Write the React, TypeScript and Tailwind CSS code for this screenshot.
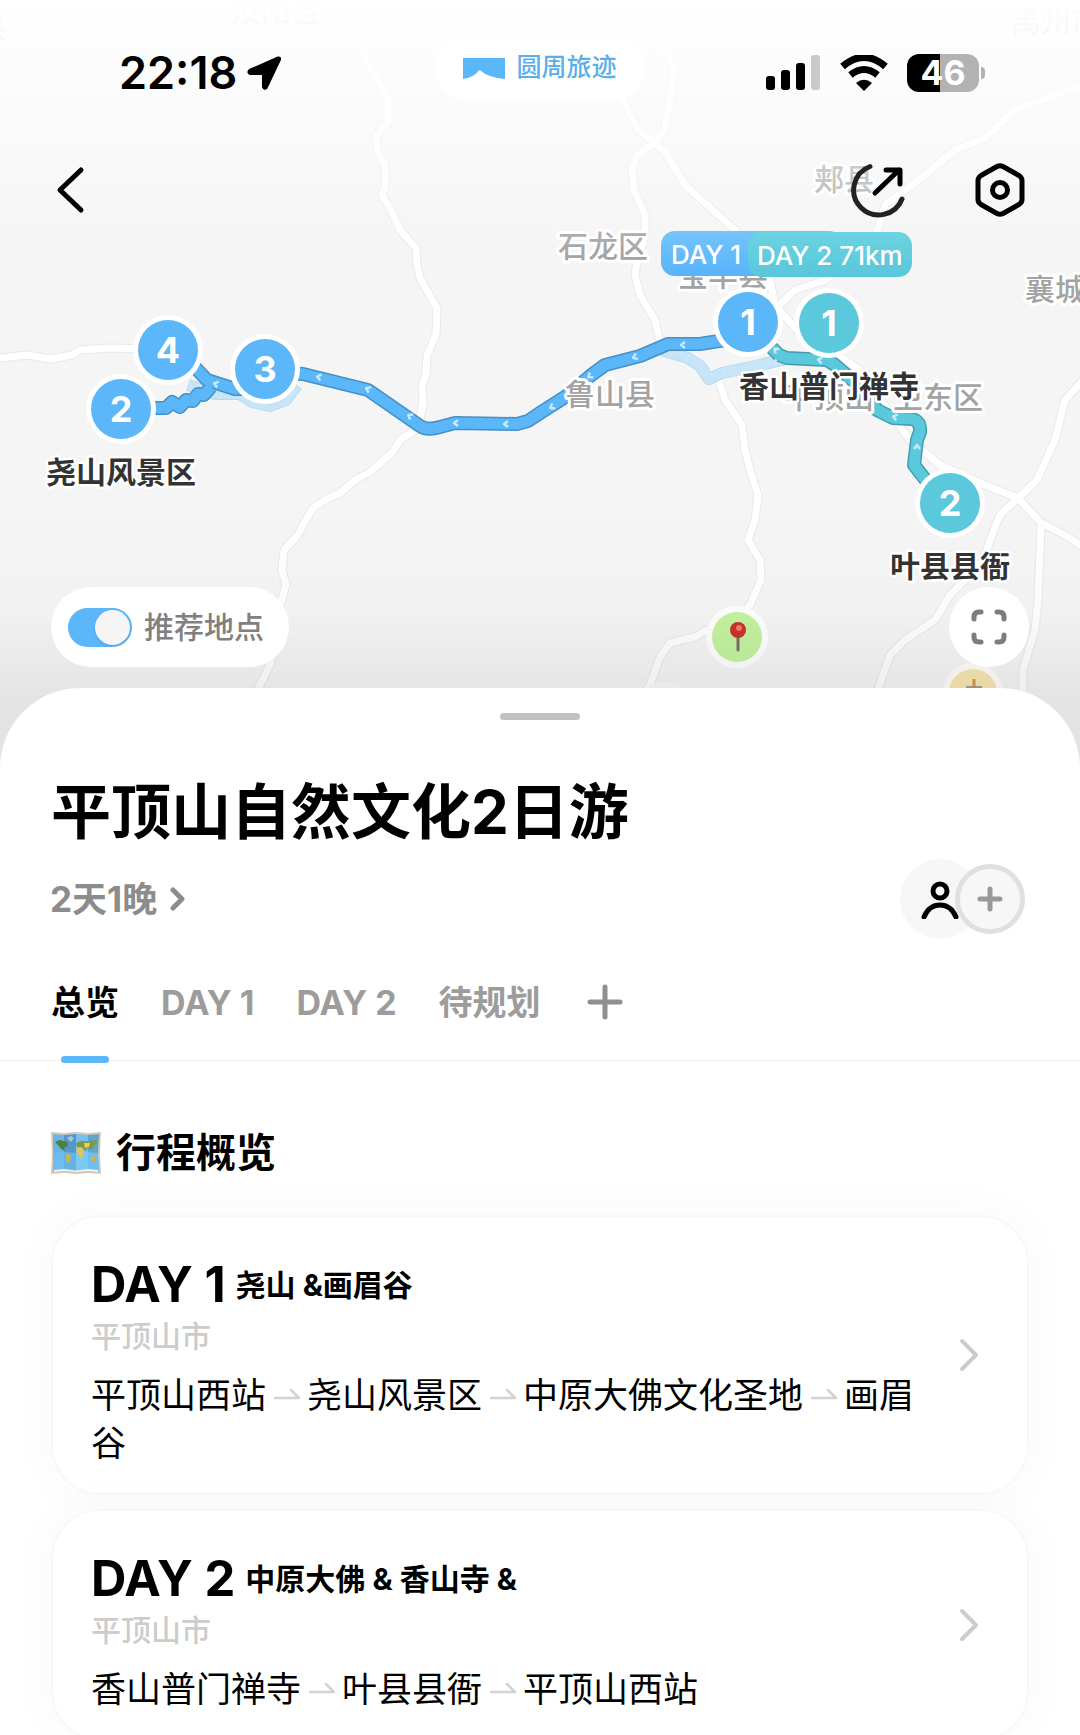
import React, { useState } from "react";

const roads = [
  "M365 30V62L378 80L388 100V122L376 136L378 152L385 165V185L382 195L390 208L400 230L416 248L417 265L420 278L430 296L437 308L436 335L427 355L426 375L422 385L423 402L420 420L415 430L400 440L393 452L370 472L355 480L340 493L325 500L313 508L303 525L298 535L284 550L282 570L286 585L280 605L275 640L270 665L255 695",
  "M0 358L28 355L50 359L72 355L80 350L110 348L150 349",
  "M658 38L668 55L674 70L670 100L665 128L655 143L637 155L632 168L634 190L645 215V235L637 262L635 275L640 295L655 320L662 350L690 360L718 378L725 400L742 425L745 450L750 470L758 495L755 520L748 540L760 560L761 580L750 605L735 622L707 630L695 637L670 643L660 657L650 685L640 700",
  "M620 95L638 130L655 143L665 152L685 185L735 230L768 270L775 305L795 328L860 370L895 420L910 440L940 465L985 485L1018 498L1040 522L1070 538L1090 552",
  "M1090 82L1015 110L985 138L955 150L925 175L905 190L885 205L876 235L826 280L795 290L778 306",
  "M1085 378L1065 400L1055 440L1037 480L1018 498L1000 515L990 540L984 560L965 580L950 595L935 620L905 640L890 655L876 695",
  "M1041 525L1038 600L1035 630L1023 670V695",
];

const greyLabels = [
  { text: "汝阳县", x: 276, y: 22 },
  { text: "禹州市", x: 1056, y: 32 },
  { text: "县", x: -8, y: 38 },
  { text: "郏县", x: 844, y: 190 },
  { text: "石龙区", x: 603, y: 257 },
  { text: "宝丰县", x: 723, y: 286 },
  { text: "襄城县", x: 1070, y: 300 },
  { text: "鲁山县", x: 610, y: 405 },
  { text: "平顶山", x: 829, y: 408 },
  { text: "卫东区", x: 938, y: 408 },
];

const placeLabels = [
  { text: "尧山风景区", x: 121, y: 483 },
  { text: "香山普门禅寺", x: 829, y: 397 },
  { text: "叶县县衙", x: 950, y: 577 },
];

const pins = [
  { label: "4", x: 168, y: 350, color: "#5bb6fa" },
  { label: "2", x: 121, y: 409, color: "#5bb6fa" },
  { label: "3", x: 265, y: 369, color: "#5bb6fa" },
  { label: "1", x: 829, y: 323, color: "#5bc8dc" },
  { label: "1", x: 748, y: 322, color: "#5bb6fa" },
  { label: "2", x: 950, y: 503, color: "#5bc8dc" },
];

// Direction marks along the routes, angle in degrees
const marks = [
  { x: 216, y: 384, a: 15 },
  { x: 319, y: 377, a: 12 },
  { x: 368, y: 389, a: 25 },
  { x: 410, y: 416, a: 32 },
  { x: 456, y: 423, a: 0 },
  { x: 506, y: 424, a: 0 },
  { x: 552, y: 407, a: -32 },
  { x: 590, y: 376, a: -38 },
  { x: 635, y: 357, a: -20 },
  { x: 683, y: 345, a: 0 },
  { x: 688, y: 358, a: 20 },
  { x: 725, y: 373, a: -10 },
  { x: 775, y: 363, a: -10 },
  { x: 776, y: 350, a: 40 },
  { x: 820, y: 360, a: 10 },
  { x: 895, y: 417, a: 15 },
  { x: 917, y: 447, a: 90 },
];

const blueRoute =
  "M748 337L719 341L700 344H668L640 356L605 365L590 376L565 397L540 413L528 421L517 424L455 423L440 427Q427 431 420 426L368 390L303 374L265 372M265 385L246 389L235 389L207 380L190 362M150 408L166 408L172 402L180 407L186 400L193 401L198 394L204 395L211 387";
const tealRoute =
  "M772 348L779 355L787 358L827 360L835 365L850 378L862 388L877 410L893 418L912 419Q921 421 920 432L917 440L914 465L928 483";
const lightRoute =
  "M188 385L215 394L240 394L252 402L270 406L286 400L297 385M662 350L688 358L700 366L709 379L722 373L760 365L790 358";

const MapView = () => (
  <svg
    className="absolute inset-0 h-full w-full"
    viewBox="0 0 1080 768"
    preserveAspectRatio="xMidYMin slice"
    role="img"
    aria-label="路线地图"
  >
    <defs>
      <linearGradient id="topFade" x1="0" y1="0" x2="0" y2="1">
        <stop offset="0" stopColor="#fff" />
        <stop offset="0.2" stopColor="#fefefe" stopOpacity="0.88" />
        <stop offset="0.6" stopColor="#fdfdfd" stopOpacity="0.5" />
        <stop offset="1" stopColor="#fafafa" stopOpacity="0" />
      </linearGradient>
      <linearGradient id="bottomShade" x1="0" y1="0" x2="0" y2="1">
        <stop offset="0" stopColor="#000" stopOpacity="0" />
        <stop offset="0.55" stopColor="#000" stopOpacity="0.015" />
        <stop offset="1" stopColor="#000" stopOpacity="0.07" />
      </linearGradient>
      <linearGradient id="dayOne" x1="0" y1="0" x2="0" y2="1">
        <stop offset="0" stopColor="#74c4fb" />
        <stop offset="1" stopColor="#58b3fa" />
      </linearGradient>
      <linearGradient id="dayTwo" x1="0" y1="0" x2="0" y2="1">
        <stop offset="0" stopColor="#6cd3e1" />
        <stop offset="1" stopColor="#57c7da" />
      </linearGradient>
    </defs>
    <rect width="1080" height="768" fill="#f5f5f5" />

    {/* Roads */}
    <g fill="none" strokeLinejoin="round">
      <g stroke="#e9e9e9" strokeWidth="9">
        {roads.map((d) => (
          <path key={d} d={d} />
        ))}
      </g>
      <g stroke="#fff" strokeWidth="7">
        {roads.map((d) => (
          <path key={d} d={d} />
        ))}
      </g>
    </g>

    {/* Routes */}
    <g fill="none" strokeLinejoin="round">
      <path d={lightRoute} stroke="#b4daf1" strokeWidth="12" />
      <path d={lightRoute} stroke="#c8e5f7" strokeWidth="10" />
      <path d={blueRoute} stroke="#4590c4" strokeWidth="14" />
      <path d={blueRoute} stroke="#5bb6fa" strokeWidth="11" />
      <path d={tealRoute} stroke="#3f9dad" strokeWidth="14" />
      <path d={tealRoute} stroke="#5bc8dc" strokeWidth="11" />
      {marks.map((m) => (
        <path
          key={`${m.x}-${m.y}`}
          d="M2 -3L-2 0L2 3"
          stroke="#c5eafc"
          strokeWidth="2.5"
          transform={`translate(${m.x} ${m.y}) rotate(${m.a})`}
        />
      ))}
    </g>

    {/* Town names */}
    <g
      className="text-[30px] font-medium"
      fill="#a3a3a3"
      stroke="#fff"
      strokeWidth="6"
      strokeLinejoin="round"
      paintOrder="stroke"
      textAnchor="middle"
    >
      {greyLabels.map((l) => (
        <text key={l.text} x={l.x} y={l.y}>
          {l.text}
        </text>
      ))}
    </g>

    <rect width="1080" height="260" fill="url(#topFade)" />

    {/* Suggested places */}
    <circle cx="664" cy="712" r="30" fill="#fafaf8" />
    <circle cx="737" cy="637" r="31" fill="#fff" />
    <circle cx="737" cy="637" r="25" fill="#c4f3a0" />
    <path d="M738 636V650" stroke="#77736b" strokeWidth="3" strokeLinecap="round" />
    <circle cx="738" cy="630" r="8" fill="#cb3129" />
    <circle cx="739" cy="628" r="3" fill="#ee7a6e" />
    <circle cx="973" cy="693" r="30" fill="#fffefa" />
    <circle cx="973" cy="693" r="24" fill="#f8e7b2" />
    <path d="M974 679V692" stroke="#e0924b" strokeWidth="3" />
    <path d="M966 687H982M969 687V692M979 687V692" stroke="#a89a86" strokeWidth="2" />

    <rect y="500" width="1080" height="200" fill="url(#bottomShade)" />
    <rect y="700" width="1080" height="68" fill="#000" fillOpacity="0.07" />

    {/* Stops */}
    <g textAnchor="middle">
      {pins.map((p) => (
        <g key={`${p.x}-${p.y}`}>
          <circle cx={p.x} cy={p.y} r="35" fill="#fff" />
          <circle cx={p.x} cy={p.y} r="30" fill={p.color} />
          <text x={p.x} y={p.y + 13} fill="#fff" className="text-[36px] font-bold">
            {p.label}
          </text>
        </g>
      ))}
    </g>
    <g
      className="text-[30px] font-bold"
      fill="#333"
      stroke="#fff"
      strokeWidth="5"
      strokeLinejoin="round"
      paintOrder="stroke"
      textAnchor="middle"
    >
      {placeLabels.map((l) => (
        <text key={l.text} x={l.x} y={l.y}>
          {l.text}
        </text>
      ))}
    </g>

    {/* Day badges */}
    <g fill="#fff" className="text-[26px] font-medium">
      <rect x="661" y="231" width="182" height="45" rx="14" fill="url(#dayOne)" />
      <text x="671" y="264">
        DAY 1
      </text>
      <rect x="748" y="232" width="164" height="45" rx="14" fill="url(#dayTwo)" />
      <text x="757" y="265">
        DAY 2 71km
      </text>
    </g>
  </svg>
);

const StatusBar = () => (
  <div className="grid h-[74px] grid-cols-[1fr_auto_1fr] items-center px-[95px]">
    <div className="flex items-center gap-[9px] pl-6">
      <span className="text-[45px] leading-[72px] font-semibold">22:18</span>
      <svg width="36" height="36" viewBox="0 0 36 36" aria-hidden="true">
        <path
          d="M32 2.500L3.500 15Q1 17.500 4 19H17V32Q18.500 35 20.500 33L34 4.500Q34.500 2 32 2.500Z"
          fill="#000"
          stroke="#000"
          strokeWidth="2"
          strokeLinejoin="round"
        />
      </svg>
    </div>

    <div className="flex h-16 items-center gap-[11px] self-start rounded-full bg-white px-7">
      <svg width="42" height="21" viewBox="0 0 42 21" aria-hidden="true">
        <path d="M0 0H42V21Q26 20 16.500 12Q10 20 0 21Z" fill="#5bb6fa" />
      </svg>
      <span className="text-[25px] font-medium text-[#5aaeea]">圆周旅迹</span>
    </div>

    <div className="flex items-center justify-end gap-[19px]">
      <svg width="55" height="36" viewBox="0 0 55 36" aria-hidden="true">
        <rect x="0" y="21" width="9" height="14" rx="3" />
        <rect x="15" y="15" width="9" height="20" rx="3" />
        <rect x="30" y="8" width="9" height="27" rx="3" />
        <rect x="45" y="0" width="9" height="35" rx="3" fill="#cacaca" />
      </svg>
      <svg width="48" height="36" viewBox="0 0 48 36" aria-hidden="true">
        <path d="M2.500 11.500Q24 -7 45.500 11.500" fill="none" stroke="#000" strokeWidth="7" />
        <path d="M10.500 20Q24 9 37.500 20" fill="none" stroke="#000" strokeWidth="7" />
        <path d="M16 28Q24 21.500 32 28L24 36Z" />
      </svg>
      <div className="flex items-center gap-[2px]">
        <div className="flex h-[38px] w-[72px] items-center justify-center rounded-xl bg-linear-to-r from-black from-46% to-[#b2b2b2] to-46%">
          <span className="text-[34px] leading-[38px] font-bold text-white">46</span>
        </div>
        <div className="h-3 w-1 rounded-r-full bg-[#b2b2b2]" />
      </div>
    </div>
  </div>
);

const NavBar = () => (
  <div className="mt-[52px] flex items-center justify-between pr-[52px] pl-[42px]">
    <button aria-label="返回">
      <svg width="56" height="56" viewBox="0 0 56 56" fill="none">
        <path d="M39 8L18 28L39 48" stroke="#000" strokeWidth="5" strokeLinecap="round" strokeLinejoin="round" />
      </svg>
    </button>
    <div className="flex gap-[66px]">
      <button aria-label="分享">
        <svg width="56" height="56" viewBox="0 0 56 56" fill="none" strokeLinecap="round" strokeLinejoin="round">
          <path d="M20 4.500A25 25 0 1 0 52 37" stroke="#222" strokeWidth="5" />
          <path d="M25 31L49 8M36 8H50V22" stroke="#000" strokeWidth="5" />
        </svg>
      </button>
      <button aria-label="设置">
        <svg width="56" height="56" viewBox="0 0 56 56" fill="none" stroke="#000" strokeWidth="5" strokeLinejoin="round">
          <path d="M25 4.500Q28 3 31 4.500L47 13.500Q50 15.500 50 18.500V37.500Q50 40.500 47 42.500L31 51.500Q28 53 25 51.500L9 42.500Q6 40.500 6 37.500V18.500Q6 15.500 9 13.500Z" />
          <circle cx="28" cy="28" r="7.500" />
        </svg>
      </button>
    </div>
  </div>
);

const MapControls = () => {
  const [showPlaces, setShowPlaces] = useState(true);

  return (
    <div className="mt-auto flex items-center justify-between px-[51px]">
      <label className="flex h-20 cursor-pointer items-center gap-3 rounded-full bg-white pr-[25px] pl-[17px]">
        <input
          type="checkbox"
          className="peer sr-only"
          checked={showPlaces}
          onChange={(e) => setShowPlaces(e.target.checked)}
        />
        <span className="flex h-[39px] w-16 items-center rounded-full bg-[#ccc] px-[2px] peer-checked:justify-end peer-checked:bg-[#5bb6fa]">
          <span className="size-[35px] rounded-full bg-[#f5f5f5] shadow" />
        </span>
        <span className="text-[30px] font-medium text-[#808080]">推荐地点</span>
      </label>
      <button
        aria-label="全屏"
        className="flex size-20 items-center justify-center rounded-full bg-white"
      >
        <svg width="36" height="36" viewBox="0 0 36 36" fill="none" stroke="#7d7d7d" strokeWidth="5" strokeLinecap="round">
          <path d="M3 10V8Q3 3 8 3H10M26 3H28Q33 3 33 8V10M33 26V28Q33 33 28 33H26M10 33H8Q3 33 3 28V26" />
        </svg>
      </button>
    </div>
  );
};

const tabs = ["总览", "DAY 1", "DAY 2", "待规划"];

const Tabs = () => {
  const [active, setActive] = useState("总览");

  return (
    <nav className="flex h-[122px] items-start gap-[42px] border-b border-[#f0f0f0] px-[51px] pt-[19px]">
      {tabs.map((tab) => (
        <button
          key={tab}
          onClick={() => setActive(tab)}
          className={`relative h-[88px] text-[34px] font-bold ${
            active === tab ? "text-black" : "text-[#9c9c9c]"
          }`}
        >
          {tab}
          {active === tab && (
            <span className="absolute inset-x-[10px] -bottom-[17px] h-[7px] rounded-full bg-[#5bb6fa]" />
          )}
        </button>
      ))}
      <button aria-label="添加" className="flex h-[88px] items-center pl-1">
        <svg width="36" height="36" viewBox="0 0 36 36" stroke="#8f8f8f" strokeWidth="5" strokeLinecap="round">
          <path d="M18 3V33M3 18H33" />
        </svg>
      </button>
    </nav>
  );
};

const WorldMapIcon = () => (
  <svg width="50" height="44" viewBox="0 0 50 44" aria-hidden="true">
    <path d="M0 1L13 2L25 1L37 2L50 1L49 22L50 43L37 42L25 43L13 42L0 43L1 22Z" fill="#d5c9b8" />
    <path d="M2 3L13 4V40L2 41Z" fill="#6ab5e6" />
    <path d="M13 4L25 3V41L13 40Z" fill="#5597c8" />
    <path d="M25 3L37 4V40L25 41Z" fill="#74c0ee" />
    <path d="M37 4L48 3L47 22L48 41L37 40Z" fill="#5ea4d4" />
    <path d="M2 22L13 21L25 22V41L13 40L2 41Z" fill="#6fc5f6" fillOpacity="0.6" />
    <path d="M25 22L37 21L47 22L48 41L37 40L25 41Z" fill="#7fcffa" fillOpacity="0.6" />
    <path d="M4 11L9 9L16 11L17 14L13 17L14 20L10 18L7 14Z" fill="#4f7f3c" />
    <path d="M15 22L20 25L19 30L17 33L15 28Z" fill="#c9b65a" />
    <path d="M16 7L20 5L23 7L20 11Z" fill="#a5c7dc" />
    <path d="M25 12L30 10L38 10L46 9L46 12L42 15L41 19L37 17L34 20L31 16L26 16Z" fill="#7c9a3f" />
    <path d="M26 17L31 17L33 21L30 29L28 24L25 21Z" fill="#dcc75c" />
    <path d="M33 12L39 12L38 16L34 17Z" fill="#e3cf66" />
    <path d="M40 26L44 25L44 30L40 30Z" fill="#d0b35b" />
    <path d="M3 39L13 38L25 39.500L37 38L47 39V41L37 40L25 41L13 40L3 41Z" fill="#f1f5f6" />
  </svg>
);

const days = [
  {
    day: "DAY 1",
    title: "尧山 &画眉谷",
    city: "平顶山市",
    stops: ["平顶山西站", "尧山风景区", "中原大佛文化圣地", "画眉谷"],
  },
  {
    day: "DAY 2",
    title: "中原大佛 & 香山寺 &",
    city: "平顶山市",
    stops: ["香山普门禅寺", "叶县县衙", "平顶山西站"],
  },
];

const DayCard = ({ day, title, city, stops }: (typeof days)[number]) => (
  <a
    href="#day"
    className="flex items-center rounded-[50px] border-2 border-[#f8f8f8] bg-white py-[26px] pr-12 pl-[38px] shadow-[0_0_50px_rgba(0,0,0,0.03)]"
  >
    <div className="flex-1 pt-3">
      <div className="flex items-center gap-[10px]">
        <h3 className="text-[49px] leading-[60px] font-bold">{day}</h3>
        <p className="text-[30px] leading-[60px] font-bold">{title}</p>
      </div>
      <p className="text-[30px] leading-[42px] font-medium text-[#ccc]">{city}</p>
      <p className="mt-[14px] text-[35px] leading-[48px]">
        {stops.map((stop, i) => (
          <React.Fragment key={stop}>
            {i > 0 && (
              <svg className="mr-[6px] ml-2 inline-block" width="27" height="22" viewBox="0 0 27 22" fill="none" stroke="#d2d2d2" strokeWidth="2.500" strokeLinecap="round" strokeLinejoin="round">
                <path d="M1 11H25L17 3" />
              </svg>
            )}
            {stop}
          </React.Fragment>
        ))}
      </p>
    </div>
    <svg className="ml-6" width="20" height="34" viewBox="0 0 20 34" fill="none" stroke="#ccc" strokeWidth="4" strokeLinecap="round" strokeLinejoin="round">
      <path d="M3 3L17 17L3 31" />
    </svg>
  </a>
);

const App = () => {
  return (
    <main className="h-screen overflow-hidden bg-white font-['Inter','Noto_Sans_CJK_SC',sans-serif] text-black">
      {/* Map */}
      <section className="relative h-[768px]">
        <MapView />
        <div className="relative flex h-full flex-col pt-9 pb-[101px]">
          <StatusBar />
          <NavBar />
          <MapControls />
        </div>
      </section>

      {/* Trip sheet */}
      <section className="relative -mt-20 rounded-t-[80px] bg-white pt-[25px]">
        <div className="mx-auto h-[7px] w-20 rounded-full bg-[#c1c1c1]" />
        <h1 className="mt-14 px-[51px] text-[60px] leading-[72px] font-bold">
          平顶山自然文化2日游
        </h1>
        <div className="mt-[11px] flex items-center justify-between pr-[55px] pl-[50px]">
          <button className="flex items-center gap-[13px] text-[35px] font-bold text-[#8c8c8c]">
            2天1晚
            <svg width="16" height="24" viewBox="0 0 16 24" fill="none" stroke="#8c8c8c" strokeWidth="5" strokeLinecap="round" strokeLinejoin="round">
              <path d="M3 3L12 12L3 21" />
            </svg>
          </button>
          <div className="flex items-center">
            <button aria-label="成员" className="flex size-20 items-center justify-center rounded-full bg-[#f7f7f7]">
              <svg width="38" height="40" viewBox="0 0 38 40" fill="none" stroke="#000" strokeWidth="5" strokeLinecap="round">
                <circle cx="19" cy="12" r="7" />
                <path d="M3 38Q8 26 19 26T35 38" />
              </svg>
            </button>
            <button
              aria-label="邀请"
              className="-ml-[25px] flex size-[70px] items-center justify-center rounded-full border-5 border-[#e0e0e0] bg-[#f7f7f7]"
            >
              <svg width="26" height="26" viewBox="0 0 26 26" stroke="#999" strokeWidth="5" strokeLinecap="round">
                <path d="M13 3V23M3 13H23" />
              </svg>
            </button>
          </div>
        </div>

        <Tabs />

        {/* Overview */}
        <div className="mt-16 px-[51px]">
          <h2 className="flex items-center gap-[15px] text-[40px] leading-[56px] font-bold">
            <WorldMapIcon />
            行程概览
          </h2>
          <div className="mt-[34px] flex flex-col gap-[14px]">
            {days.map((d) => (
              <DayCard key={d.day} {...d} />
            ))}
          </div>
        </div>
      </section>
    </main>
  );
};

export default App;
